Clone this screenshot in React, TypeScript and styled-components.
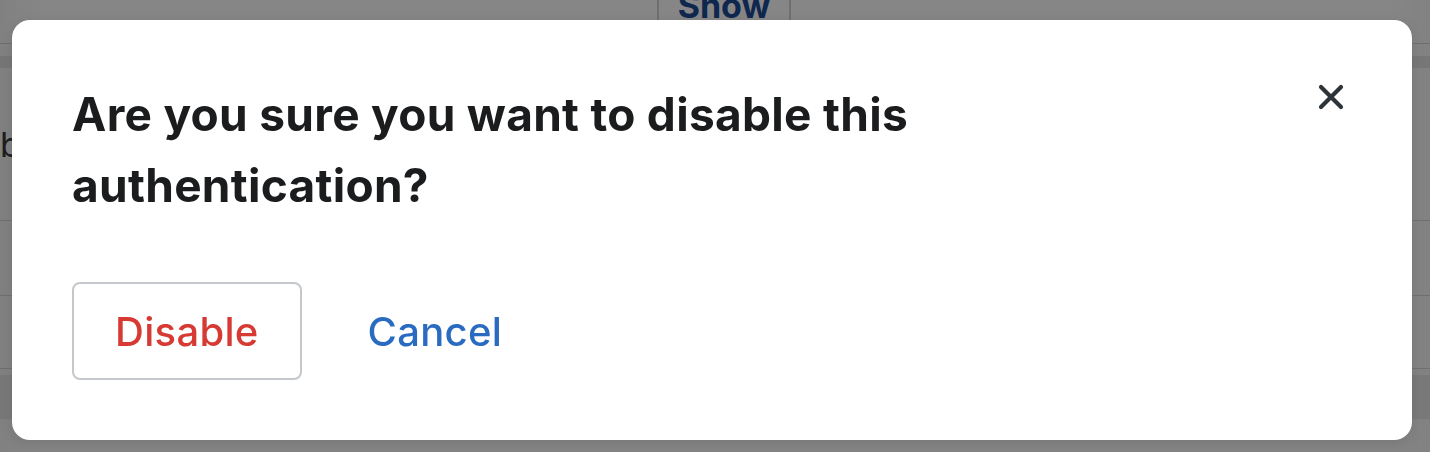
import React from 'react';
import styled, { createGlobalStyle } from 'styled-components';

const GlobalStyle = createGlobalStyle`
  html, body {
    margin: 0;
    padding: 0;
    width: 1430px;
    height: 452px;
    overflow: hidden;
    background: #ffffff;
    font-family: Inter, "Noto Sans", "Liberation Sans", sans-serif;
  }
`;

const Page = styled.div`
  width: 1430px;
  height: 452px;
  display: flex;
  flex-direction: column;
  background: #fdfdfd;
`;

const TopBar = styled.div`
  height: 43px;
  border-bottom: 1px solid #d6d6d6;
  display: flex;
  justify-content: center;
  align-items: flex-end;
  padding-left: 18px;
`;

const ShowButton = styled.div`
  width: 130px;
  height: 43px;
  border-left: 2px solid #d2d2d2;
  border-right: 2px solid #d2d2d2;
  color: #1d4a94;
  font-weight: 700;
  font-size: 34px;
  display: flex;
  justify-content: center;
  align-items: flex-end;
  line-height: 1;
  margin-bottom: 20px;
  overflow: hidden;
`;

const Band = styled.div`
  height: 12px;
  margin-top: 12px;
  background: #e8e8e8;
`;

const Row = styled.div<{ $h: number }>`
  height: ${(p) => p.$h}px;
  border-bottom: 1px solid #dadada;
  display: flex;
  align-items: center;
  color: #3a3a3a;
  font-size: 34px;
`;

const FootBand = styled.div`
  height: 44px;
  margin-top: 6px;
  background: #ececec;
`;

const Overlay = styled.div`
  position: fixed;
  inset: 0;
  background: rgba(0, 0, 0, 0.47);
  background-image: linear-gradient(90deg, rgba(0, 0, 0, 0.04), rgba(0, 0, 0, 0) 3%, rgba(0, 0, 0, 0) 97%, rgba(0, 0, 0, 0.03));
  display: flex;
  justify-content: flex-start;
  align-items: flex-start;
  padding: 20px 0 0 12px;
`;

const Modal = styled.div`
  width: 1400px;
  height: 420px;
  box-sizing: border-box;
  background: #ffffff;
  border-radius: 18px;
  padding: 59px 60px 61px 60px;
  box-shadow: 0 4px 16px rgba(0, 0, 0, 0.12);
  display: flex;
  flex-direction: column;
`;

const Header = styled.div`
  display: flex;
  justify-content: space-between;
  align-items: flex-start;
`;

const Title = styled.h2`
  margin: 0;
  font-size: 46px;
  line-height: 71px;
  font-weight: 700;
  color: #1b1c1e;
  letter-spacing: 0.3px;
`;

const CloseButton = styled.button`
  width: 48px;
  height: 48px;
  margin-top: -6px;
  margin-right: -3px;
  border: none;
  background: none;
  padding: 0;
  display: flex;
  align-items: center;
  justify-content: center;
  cursor: pointer;
`;

const Actions = styled.div`
  margin-top: 61px;
  display: flex;
  align-items: center;
  gap: 23px;
`;

const ActionButton = styled.button<{ $variant: 'danger' | 'link' }>`
  height: 98px;
  box-sizing: border-box;
  padding: 0 41px;
  border-radius: 8px;
  border: 2px solid ${(p) => (p.$variant === 'danger' ? '#c4c8cc' : 'transparent')};
  background: #ffffff;
  color: ${(p) => (p.$variant === 'danger' ? '#d63a33' : '#2a6bc2')};
  font-family: Inter, "Noto Sans", "Liberation Sans", sans-serif;
  font-size: 40px;
  font-weight: 500;
  letter-spacing: 0.3px;
  cursor: pointer;
`;

export default function App() {
  return (
    <>
      <GlobalStyle />
      <Page>
        <TopBar>
          <ShowButton>Show</ShowButton>
        </TopBar>
        <Band />
        <Row $h={152}>bo</Row>
        <Row $h={74} />
        <Row $h={72} />
        <FootBand />
      </Page>
      <Overlay>
        <Modal role="dialog">
          <Header>
            <Title>
              Are you sure you want to disable this
              <br />
              authentication?
            </Title>
            <CloseButton aria-label="Close">
              <svg width="26" height="26" viewBox="0 0 26 26">
                <path
                  d="M3 3 L23 23 M23 3 L3 23"
                  stroke="#2c343a"
                  strokeWidth="4.2"
                  strokeLinecap="round"
                  fill="none"
                />
              </svg>
            </CloseButton>
          </Header>
          <Actions>
            <ActionButton $variant="danger">Disable</ActionButton>
            <ActionButton $variant="link">Cancel</ActionButton>
          </Actions>
        </Modal>
      </Overlay>
    </>
  );
}
